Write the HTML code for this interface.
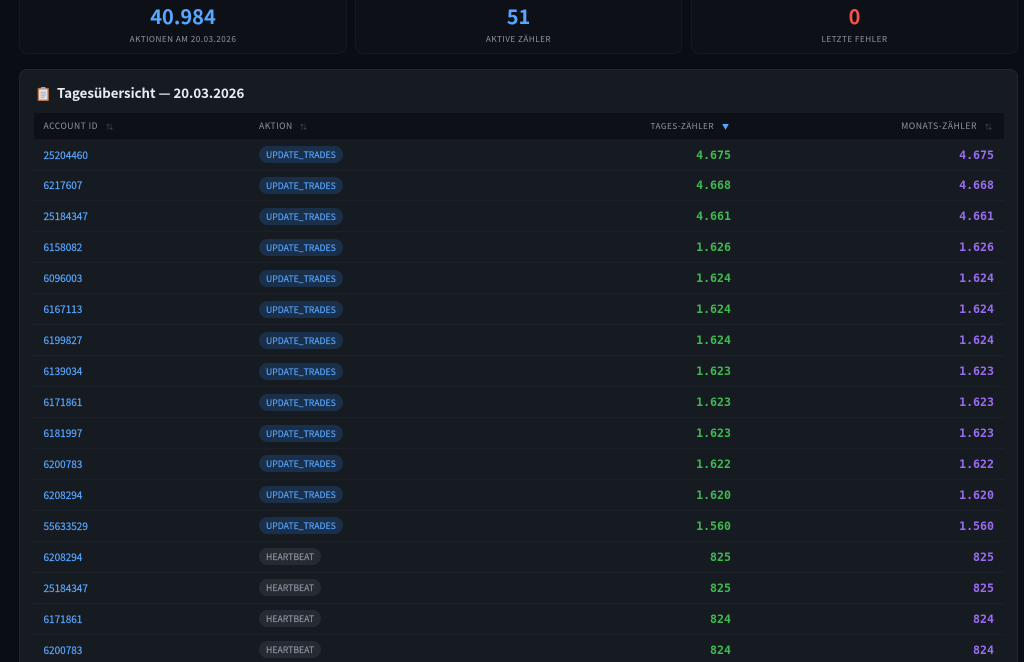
<!DOCTYPE html>
<html lang="de"><head><meta charset="utf-8"><style>
*{box-sizing:border-box;margin:0;padding:0}
html,body{width:1024px;height:662px;overflow:hidden;background:#0a0d14;font-family:"Noto Sans CJK SC","Liberation Sans",sans-serif;position:relative}
.card{position:absolute;top:-40px;height:94px;background:#0d1117;border:1px solid #141920;border-radius:8px;text-align:center}
.num{position:absolute;left:0;right:0;top:42.3px;font-size:20px;line-height:26px;font-weight:700}
.lbl{position:absolute;left:0;right:0;top:72px;font-size:8.2px;line-height:12px;letter-spacing:.47px;color:#8b949e}
.panel{position:absolute;left:19px;top:69px;width:999px;height:593px;background:#161b22;border:1px solid #21262d;border-bottom:0;border-radius:8px 8px 0 0}
.title{position:absolute;left:57px;top:84px;font-size:13.2px;line-height:18px;font-weight:700;color:#e6edf3}
.head{position:absolute;left:34px;top:113px;width:970px;height:26px;background:#0d1117}
.h{position:absolute;top:120.3px;font-size:8.2px;line-height:12px;letter-spacing:.47px;color:#8b949e;white-space:nowrap}
.s{position:absolute;top:121px;font-size:7px;line-height:12px;color:#484f58}
.row{position:absolute;left:34px;width:970px;height:31px;border-bottom:1px solid #1c2129}
.id{position:absolute;left:9.5px;top:8px;font-size:10px;line-height:14px;color:#58a6ff;-webkit-text-stroke:.2px #58a6ff}
.b{position:absolute;left:225px;top:6.6px;height:17px;border-radius:9px;font-size:8.7px;line-height:17px;padding:0 7px;white-space:nowrap;-webkit-text-stroke:.15px currentColor}
.u{background:#1a2f4a;color:#58a6ff}
.x{background:#262b33;color:#8b949e}
.t,.m{position:absolute;top:8px;font-family:"DejaVu Sans Mono","Liberation Mono",monospace;font-size:11.6px;line-height:15px;font-weight:700;text-align:right;width:80px}
.t{right:273px;color:#3fb950}
.m{right:10px;color:#9a6cf0}
</style></head><body>
<div class="card" style="left:19px;width:328px"><div class="num" style="color:#58a6ff">40.984</div><div class="lbl">AKTIONEN AM 20.03.2026</div></div>
<div class="card" style="left:355px;width:327px"><div class="num" style="color:#58a6ff">51</div><div class="lbl">AKTIVE ZÄHLER</div></div>
<div class="card" style="left:691px;width:327px"><div class="num" style="color:#f85149">0</div><div class="lbl">LETZTE FEHLER</div></div>
<div class="panel"></div>
<svg style="position:absolute;left:37px;top:87px" width="12.5" height="14" viewBox="0 0 13 15"><rect x=".5" y="1" width="12" height="14" rx="1" fill="#b5764a"/><rect x="2" y="2.5" width="9" height="11" fill="#e6e3ea"/><rect x="4" y="0" width="5" height="3" rx="1" fill="#a8a8b0"/><path d="M3.5 5.5h6M3.5 7.5h6M3.5 9.5h6M3.5 11.5h4" stroke="#9a9aa8" stroke-width=".8"/></svg>
<div class="title">Tagesübersicht — 20.03.2026</div>
<div class="head"></div>
<div class="h" style="left:43.5px;font-size:8.6px">ACCOUNT ID</div><div class="s" style="left:106px">⇅</div>
<div class="h" style="left:259px;font-size:8.6px">AKTION</div><div class="s" style="left:300px">⇅</div>
<div class="h" style="right:310px">TAGES-ZÄHLER</div><div class="s" style="left:722px;color:#58a6ff">▼</div>
<div class="h" style="right:47px;font-size:8.7px">MONATS-ZÄHLER</div><div class="s" style="left:985px">⇅</div>
<div class="row" style="top:139.5px"><span class="id">25204460</span><span class="b u">UPDATE_TRADES</span><span class="t">4.675</span><span class="m">4.675</span></div>
<div class="row" style="top:170.4px"><span class="id">6217607</span><span class="b u">UPDATE_TRADES</span><span class="t">4.668</span><span class="m">4.668</span></div>
<div class="row" style="top:201.4px"><span class="id">25184347</span><span class="b u">UPDATE_TRADES</span><span class="t">4.661</span><span class="m">4.661</span></div>
<div class="row" style="top:232.3px"><span class="id">6158082</span><span class="b u">UPDATE_TRADES</span><span class="t">1.626</span><span class="m">1.626</span></div>
<div class="row" style="top:263.3px"><span class="id">6096003</span><span class="b u">UPDATE_TRADES</span><span class="t">1.624</span><span class="m">1.624</span></div>
<div class="row" style="top:294.2px"><span class="id">6167113</span><span class="b u">UPDATE_TRADES</span><span class="t">1.624</span><span class="m">1.624</span></div>
<div class="row" style="top:325.1px"><span class="id">6199827</span><span class="b u">UPDATE_TRADES</span><span class="t">1.624</span><span class="m">1.624</span></div>
<div class="row" style="top:356.1px"><span class="id">6139034</span><span class="b u">UPDATE_TRADES</span><span class="t">1.623</span><span class="m">1.623</span></div>
<div class="row" style="top:387px"><span class="id">6171861</span><span class="b u">UPDATE_TRADES</span><span class="t">1.623</span><span class="m">1.623</span></div>
<div class="row" style="top:418px"><span class="id">6181997</span><span class="b u">UPDATE_TRADES</span><span class="t">1.623</span><span class="m">1.623</span></div>
<div class="row" style="top:448.9px"><span class="id">6200783</span><span class="b u">UPDATE_TRADES</span><span class="t">1.622</span><span class="m">1.622</span></div>
<div class="row" style="top:479.8px"><span class="id">6208294</span><span class="b u">UPDATE_TRADES</span><span class="t">1.620</span><span class="m">1.620</span></div>
<div class="row" style="top:510.8px"><span class="id">55633529</span><span class="b u">UPDATE_TRADES</span><span class="t">1.560</span><span class="m">1.560</span></div>
<div class="row" style="top:541.7px"><span class="id">6208294</span><span class="b x">HEARTBEAT</span><span class="t">825</span><span class="m">825</span></div>
<div class="row" style="top:572.7px"><span class="id">25184347</span><span class="b x">HEARTBEAT</span><span class="t">825</span><span class="m">825</span></div>
<div class="row" style="top:603.6px"><span class="id">6171861</span><span class="b x">HEARTBEAT</span><span class="t">824</span><span class="m">824</span></div>
<div class="row" style="top:634.5px;height:27.5px;border-bottom:0"><span class="id">6200783</span><span class="b x">HEARTBEAT</span><span class="t">824</span><span class="m">824</span></div>
</body></html>
